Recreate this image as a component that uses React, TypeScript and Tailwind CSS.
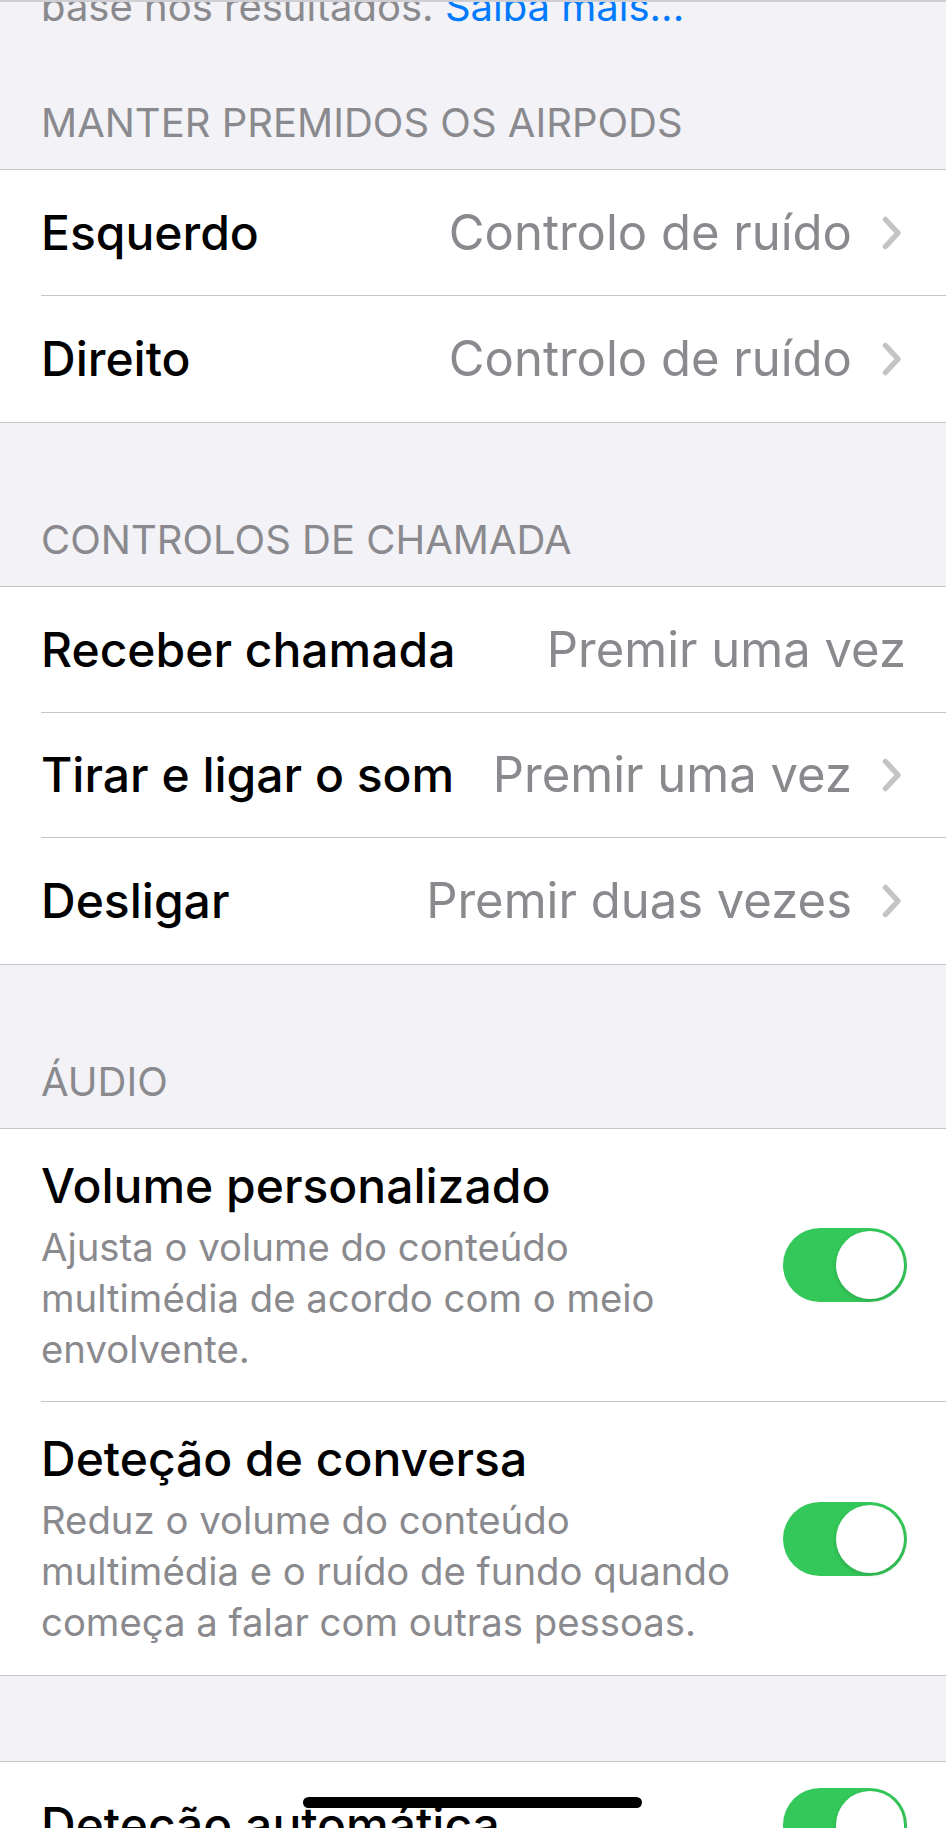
import React from "react";

function Chevron() {
  return (
    <svg width="22" height="36" viewBox="0 0 22 36" className="shrink-0">
      <path d="M4.5 4.5 L17 18 L4.5 31.5" fill="none" stroke="#c4c4c7" strokeWidth="5.5" strokeLinecap="round" strokeLinejoin="round" />
    </svg>
  );
}

function Toggle() {
  return (
    <div className="flex h-[74px] w-[124px] shrink-0 items-center justify-end rounded-full bg-[#34c759] p-[3px]">
      <div className="h-[68px] w-[68px] rounded-full bg-white shadow-[0_2px_4px_rgba(0,0,0,0.15)]" />
    </div>
  );
}

function Header({ children, first }: { children: React.ReactNode; first?: boolean }) {
  return (
    <p
      className={
        (first ? "mt-[72px] " : "mt-[95px] ") +
        "px-[41px] pb-[24px] text-[40px] leading-[44px] text-[#8a8a8e]"
      }
    >
      {children}
    </p>
  );
}

function ValueRow({
  title,
  value,
  chevron = true,
  last,
  h = "h-[126px]",
}: {
  title: string;
  value: string;
  chevron?: boolean;
  last?: boolean;
  h?: string;
}) {
  return (
    <div className={"flex pl-[41px] " + h}>
      <div
        className={
          "flex flex-1 items-center justify-between " +
          (chevron ? "pr-[43px] " : "pr-[40px] ") +
          (last ? "" : "border-b border-[#c6c6c8]")
        }
      >
        <span className="text-[48px] font-medium leading-[60px] text-black">{title}</span>
        <div className="flex items-center gap-[29px]">
          <span className="text-[49px] leading-[60px] text-[#8a8a8e]">{value}</span>
          {chevron && <Chevron />}
        </div>
      </div>
    </div>
  );
}

function ToggleRow({
  title,
  desc,
  last,
  h,
}: {
  title: string;
  desc: string[];
  last?: boolean;
  h: string;
}) {
  return (
    <div className={"flex pl-[41px] " + h}>
      <div
        className={
          "flex flex-1 items-center justify-between pr-[39px] " +
          (last ? "" : "border-b border-[#c6c6c8]")
        }
      >
        <div className="flex flex-col">
          <span className="text-[48px] font-medium leading-[60px] text-black">{title}</span>
          <div className="mt-[6px] flex flex-col text-[38.3px] leading-[51px] text-[#8a8a8e]">
            {desc.map((d) => (
              <span key={d}>{d}</span>
            ))}
          </div>
        </div>
        <Toggle />
      </div>
    </div>
  );
}

export default function App() {
  return (
    <div className="relative h-[1828px] w-[946px] overflow-hidden bg-[#f2f2f7] font-['Inter',sans-serif]">
      <div className="overflow-hidden border-t-2 border-[#cfcfd3]">
        <p className="-mt-[17px] px-[41px] text-[40px] leading-[44px] text-[#8a8a8e]">
          base nos resultados. <span className="text-[#007aff]">Saiba mais...</span>
        </p>
      </div>

      <Header first>MANTER PREMIDOS OS AIRPODS</Header>
      <div className="border-y border-[#c6c6c8] bg-white">
        <ValueRow title="Esquerdo" value="Controlo de ruído" />
        <ValueRow title="Direito" value="Controlo de ruído" last />
      </div>

      <Header>CONTROLOS DE CHAMADA</Header>
      <div className="border-y border-[#c6c6c8] bg-white">
        <ValueRow title="Receber chamada" value="Premir uma vez" chevron={false} />
        <ValueRow title="Tirar e ligar o som" value="Premir uma vez" h="h-[125px]" />
        <ValueRow title="Desligar" value="Premir duas vezes" last />
      </div>

      <Header>ÁUDIO</Header>
      <div className="border-y border-[#c6c6c8] bg-white">
        <ToggleRow
          h="h-[273px]"
          title="Volume personalizado"
          desc={["Ajusta o volume do conteúdo", "multimédia de acordo com o meio", "envolvente."]}
        />
        <ToggleRow
          h="h-[273px]"
          title="Deteção de conversa"
          desc={[
            "Reduz o volume do conteúdo",
            "multimédia e o ruído de fundo quando",
            "começa a falar com outras pessoas.",
          ]}
          last
        />
      </div>

      <div className="mt-[85px] border-t border-[#c6c6c8] bg-white">
        <div className="flex h-[126px] items-center justify-between pl-[41px] pr-[39px]">
          <span className="text-[48px] font-medium leading-[60px] text-black">Deteção automática</span>
          <Toggle />
        </div>
      </div>

      <div className="absolute left-[303px] top-[1797px] h-[11px] w-[339px] rounded-full bg-black" />
    </div>
  );
}
